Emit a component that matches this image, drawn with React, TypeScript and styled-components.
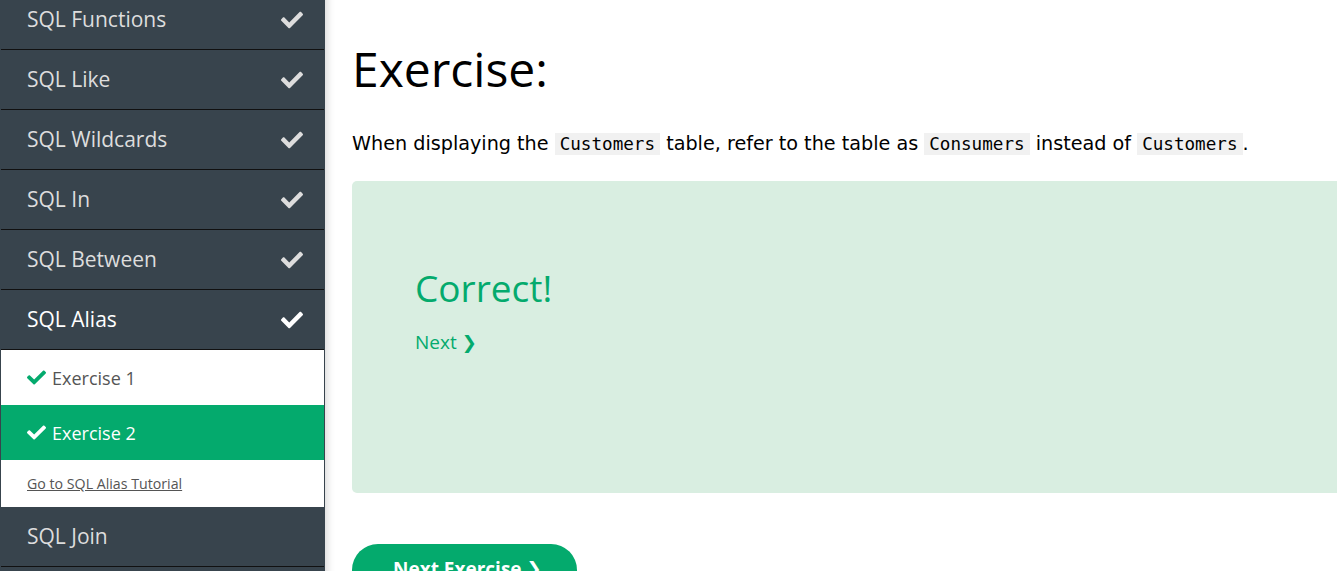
import React from "react";
import styled, { createGlobalStyle } from "styled-components";

const GlobalStyle = createGlobalStyle`
  html, body { margin: 0; padding: 0; background: #fff; }
  body { overflow: hidden; font-family: "Open Sans", "Noto Sans", sans-serif; }
  #root { height: 571px; overflow: hidden; }
`;

const Page = styled.div`
  display: flex;
  align-items: flex-start;
  height: 571px;
  overflow: hidden;
`;

const Sidebar = styled.nav`
  flex: 0 0 325px;
  width: 325px;
  box-sizing: border-box;
  padding: 0 1px;
  background: #38444d;
  min-height: 600px;
  margin-top: -10px;
  box-shadow: 2px 0 8px rgba(0, 0, 0, 0.16);
  position: relative;
  z-index: 1;
`;

const TopicRow = styled.div<{ $active?: boolean }>`
  display: flex;
  align-items: center;
  justify-content: space-between;
  height: 59px;
  border-bottom: 1px solid #111;
  padding: 0 21px 0 26px;
  font-size: 21px;
  line-height: 28px;
  color: ${(p) => (p.$active ? "#ffffff" : "#dddddd")};
  span { margin-top: -2px; }
`;

const CheckIcon = styled.svg<{ $size: number }>`
  width: ${(p) => p.$size}px;
  height: ${(p) => p.$size}px;
  fill: currentColor;
  flex: 0 0 auto;
`;

const SubPanel = styled.div`
  background: #fff;
`;

const ExerciseRow = styled.div<{ $active?: boolean }>`
  display: flex;
  align-items: center;
  gap: 6px;
  height: 55px;
  padding-left: 26px;
  font-size: 18px;
  background: ${(p) => (p.$active ? "#04aa6d" : "#ffffff")};
  color: ${(p) => (p.$active ? "#ffffff" : "#555555")};
  svg { color: ${(p) => (p.$active ? "#ffffff" : "#04aa6d")}; }
`;

const TutorialLink = styled.a`
  display: flex;
  align-items: center;
  height: 47px;
  padding-left: 26px;
  font-size: 14.2px;
  color: #555;
  text-decoration: underline;
`;

const Main = styled.main`
  flex: 0 0 auto;
  width: 1100px;
  padding: 40px 0 0 27px;
`;

const Heading = styled.h1`
  margin: 0;
  font-size: 48px;
  line-height: 58px;
  font-weight: 400;
  color: #000;
`;

const Instruction = styled.p`
  margin: 32px 0 0;
  font-family: "DejaVu Sans", Verdana, sans-serif;
  font-size: 19.2px;
  line-height: 27px;
  color: #000;
`;

const Code = styled.code`
  font-family: "DejaVu Sans Mono", "Liberation Mono", monospace;
  font-size: 17.6px;
  background: #f1f1f1;
  padding: 1px 5px;
`;

const ResultBox = styled.div`
  box-sizing: border-box;
  margin-top: 23px;
  height: 312px;
  border-radius: 5px;
  background: #d9eee1;
  padding: 85px 63px 0;
`;

const Correct = styled.div`
  font-size: 37px;
  line-height: 44px;
  color: #04aa6d;
`;

const NextLink = styled.div`
  margin-top: 18px;
  font-size: 19px;
  line-height: 28px;
  color: #04aa6d;
`;

const NextButton = styled.button`
  margin-top: 51px;
  width: 225px;
  height: 56px;
  border: none;
  border-radius: 26px;
  background: #04aa6d;
  color: #fff;
  font-family: "Open Sans", sans-serif;
  font-weight: 700;
  font-size: 19px;
  line-height: 28px;
  padding: 11px 0 0 41px;
  display: flex;
  align-items: flex-start;
  gap: 5px;
`;

const Chevron = styled.span`
  font-family: "DejaVu Sans", sans-serif;
  font-size: 0.95em;
`;

const Check = ({ size }: { size: number }) => (
  <CheckIcon $size={size} viewBox="0 40 512 432">
    <path d="M173.898 439.404l-166.4-166.4c-9.997-9.997-9.997-26.206 0-36.204l36.203-36.204c9.997-9.998 26.207-9.998 36.204 0L192 312.69 432.095 72.596c9.997-9.997 26.207-9.997 36.204 0l36.203 36.204c9.997 9.997 9.997 26.206 0 36.204l-294.4 294.401c-9.998 9.997-26.207 9.997-36.204-.001z" />
  </CheckIcon>
);

const topics = ["SQL Functions", "SQL Like", "SQL Wildcards", "SQL In", "SQL Between"];

export default function App() {
  return (
    <>
      <GlobalStyle />
      <Page>
        <Sidebar>
          {topics.map((t) => (
            <TopicRow key={t}>
              <span>{t}</span>
              <Check size={22} />
            </TopicRow>
          ))}
          <TopicRow $active>
            <span>SQL Alias</span>
            <Check size={22} />
          </TopicRow>
          <SubPanel>
            <ExerciseRow>
              <Check size={19} />
              <span>Exercise 1</span>
            </ExerciseRow>
            <ExerciseRow $active>
              <Check size={19} />
              <span>Exercise 2</span>
            </ExerciseRow>
            <TutorialLink href="#">Go to SQL Alias Tutorial</TutorialLink>
          </SubPanel>
          <TopicRow>
            <span>SQL Join</span>
          </TopicRow>
        </Sidebar>
        <Main>
          <Heading>Exercise:</Heading>
          <Instruction>
            When displaying the <Code>Customers</Code> table, refer to the table as <Code>Consumers</Code> instead of{" "}
            <Code>Customers</Code>.
          </Instruction>
          <ResultBox>
            <Correct>Correct!</Correct>
            <NextLink>
              Next <Chevron>❯</Chevron>
            </NextLink>
          </ResultBox>
          <NextButton>
            <span>Next Exercise</span>
            <Chevron>❯</Chevron>
          </NextButton>
        </Main>
      </Page>
    </>
  );
}
